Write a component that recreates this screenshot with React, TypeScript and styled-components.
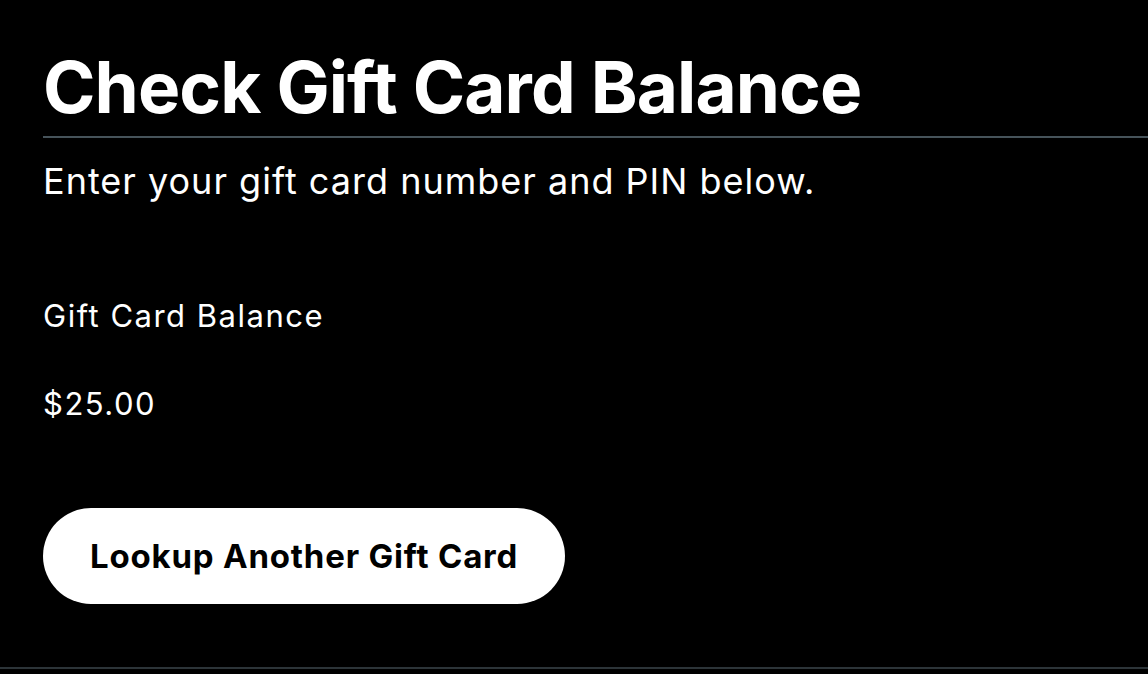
import React from "react";
import styled, { createGlobalStyle } from "styled-components";

const Global = createGlobalStyle`
  html, body { margin: 0; padding: 0; background: #000; }
  body { font-family: Inter, "Liberation Sans", sans-serif; color: #fff; }
`;

const Page = styled.div`
  min-height: 674px;
  box-sizing: border-box;
  display: flex;
  flex-direction: column;
  background: #000;
`;

const Content = styled.main`
  display: flex;
  flex-direction: column;
  align-items: flex-start;
  padding: 39px 0 0 43px;
  flex: 1;
`;

const Title = styled.h1`
  margin: 0;
  font-family: Inter, "Liberation Sans", sans-serif;
  font-weight: 700;
  font-size: 71px;
  line-height: 96px;
  letter-spacing: -0.9px;
  color: #fff;
`;

const Divider = styled.div`
  align-self: stretch;
  height: 2px;
  background: #46535a;
  margin-top: 1px;
`;

const Subtitle = styled.p`
  margin: 21px 0 0;
  font-size: 36px;
  line-height: 44px;
  letter-spacing: 1px;
  font-weight: 400;
  color: #fff;
`;

const Label = styled.p`
  margin: 0;
  font-size: 31px;
  line-height: 40px;
  letter-spacing: 1.5px;
  color: #fff;
`;

const Section = styled.section`
  display: flex;
  flex-direction: column;
  gap: 48px;
  margin-top: 93px;
`;

const Button = styled.button`
  margin-top: 84px;
  height: 96px;
  padding: 0 47px;
  border: none;
  border-radius: 48px;
  background: #fff;
  color: #000;
  font-family: Inter, "Liberation Sans", sans-serif;
  font-weight: 700;
  font-size: 33px;
  letter-spacing: 0.8px;
  cursor: pointer;
`;

const Footer = styled.div`
  height: 2px;
  background: #2c3438;
  margin-bottom: 5px;
`;

export default function App() {
  return (
    <>
      <Global />
      <Page>
        <Content>
          <Title>Check Gift Card Balance</Title>
          <Divider />
          <Subtitle>Enter your gift card number and PIN below.</Subtitle>
          <Section>
            <Label>Gift Card Balance</Label>
            <Label>$25.00</Label>
          </Section>
          <Button type="button">Lookup Another Gift Card</Button>
        </Content>
        <Footer />
      </Page>
    </>
  );
}
